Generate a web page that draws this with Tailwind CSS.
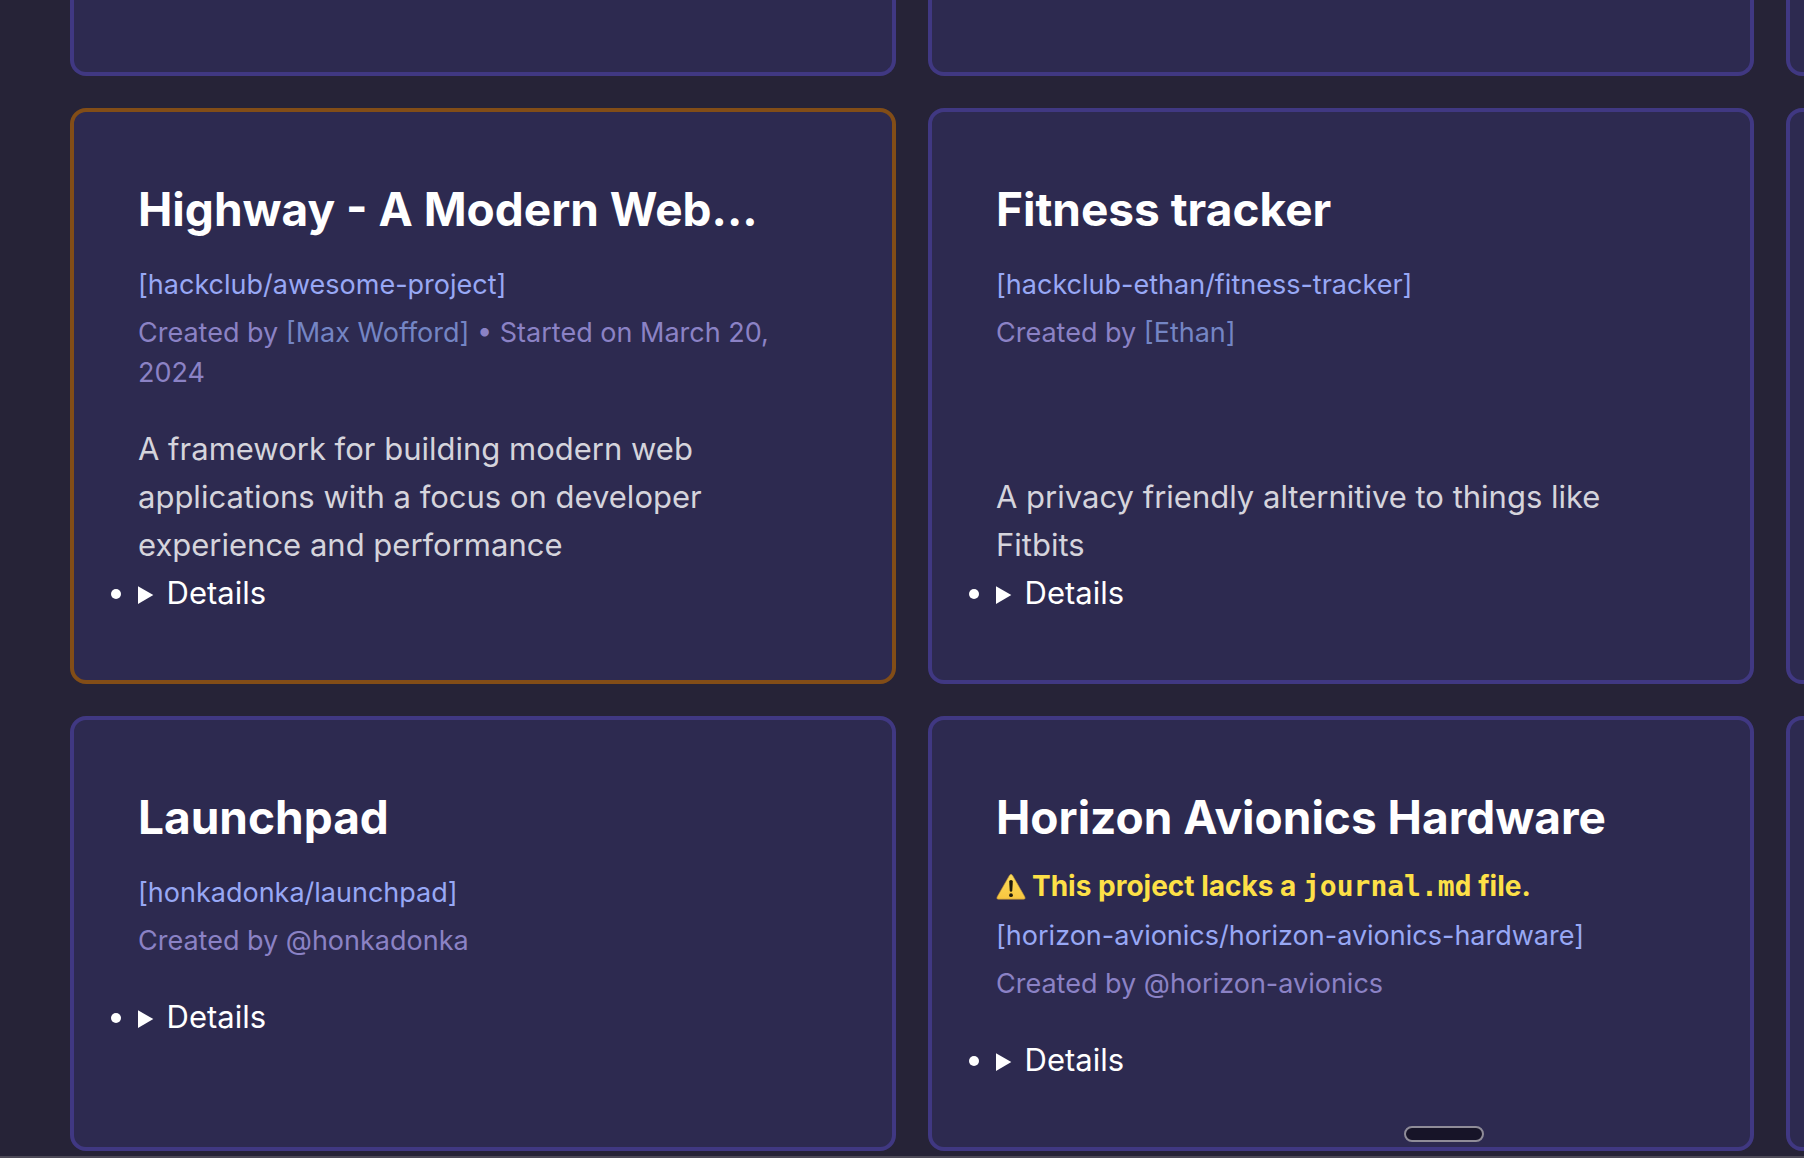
<!DOCTYPE html>
<html lang="en">
<head>
    <meta charset="UTF-8">
    <meta name="viewport" content="width=device-width, initial-scale=1.0">
    <title>Projects</title>
    <script src="https://cdn.jsdelivr.net/npm/@tailwindcss/browser@4"></script>
</head>
<body class="bg-[#262337] text-white font-['Inter',sans-serif] text-[31px] leading-[48px] h-screen overflow-hidden flex flex-col">
    <main class="flex-1 min-h-0 overflow-hidden pl-[70px]">
        <!-- two full columns, the third one peeks in at the right edge -->
        <div class="grid grid-cols-[repeat(3,calc((100vw-152px)/2))] gap-8">
            <div class="h-[76px] border-4 border-t-0 border-[#403882] bg-[#2d2a50] rounded-b-2xl"></div>
            <div class="h-[76px] border-4 border-t-0 border-[#403882] bg-[#2d2a50] rounded-b-2xl"></div>
            <div class="h-[76px] border-4 border-t-0 border-[#403882] bg-[#2d2a50] rounded-b-2xl"></div>

            <article class="flex flex-col border-4 border-[#824d17] bg-[#2d2a50] rounded-2xl px-16 pt-[65px] pb-[61px]">
                <h2 class="text-[46px] leading-[64px] font-bold truncate mb-4">Highway - A Modern Web...</h2>
                <a href="#" class="block text-[27px] leading-10 text-[#98a8f5] mt-2 mb-2">[hackclub/awesome-project]</a>
                <p class="text-[27px] leading-10 text-[#8b82c5] mb-8">Created by <a href="#" class="text-[#7485c4]">[Max Wofford]</a> • Started on March 20, 2024</p>
                <p class="text-[#d5d4dc] mt-auto">A framework for building modern web applications with a focus on developer experience and performance</p>
                <ul class="list-disc">
                    <li><details><summary class="[&::marker]:text-[27px]">Details</summary></details></li>
                </ul>
            </article>

            <article class="flex flex-col border-4 border-[#403882] bg-[#2d2a50] rounded-2xl px-16 pt-[65px] pb-[61px]">
                <h2 class="text-[46px] leading-[64px] font-bold truncate mb-4">Fitness tracker</h2>
                <a href="#" class="block text-[27px] leading-10 text-[#98a8f5] mt-2 mb-2">[hackclub-ethan/fitness-tracker]</a>
                <p class="text-[27px] leading-10 text-[#8b82c5] mb-8">Created by <a href="#" class="text-[#7485c4]">[Ethan]</a></p>
                <p class="text-[#d5d4dc] mt-auto">A privacy friendly alternitive to things like Fitbits</p>
                <ul class="list-disc">
                    <li><details><summary class="[&::marker]:text-[27px]">Details</summary></details></li>
                </ul>
            </article>

            <article class="border-4 border-[#403882] bg-[#2d2a50] rounded-2xl"></article>

            <article class="flex flex-col border-4 border-[#403882] bg-[#2d2a50] rounded-2xl px-16 pt-[65px] pb-[61px]">
                <h2 class="text-[46px] leading-[64px] font-bold truncate mb-4">Launchpad</h2>
                <a href="#" class="block text-[27px] leading-10 text-[#98a8f5] mt-2 mb-2">[honkadonka/launchpad]</a>
                <p class="text-[27px] leading-10 text-[#8b82c5] mb-8">Created by @honkadonka</p>
                <ul class="list-disc">
                    <li><details><summary class="[&::marker]:text-[27px]">Details</summary></details></li>
                </ul>
            </article>

            <article class="flex flex-col border-4 border-[#403882] bg-[#2d2a50] rounded-2xl px-16 pt-[65px] pb-[61px]">
                <h2 class="text-[46px] leading-[64px] font-bold truncate mb-4">Horizon Avionics Hardware</h2>
                <p class="flex items-center text-[28px] leading-[42px] font-bold text-[#fde047]">
                    <svg class="w-[30px] h-[26px] mr-1.5 shrink-0" viewBox="0 0 30 26" aria-hidden="true">
                        <defs>
                            <linearGradient id="warn" x1="0" y1="0" x2="0" y2="1">
                                <stop offset="0" stop-color="#fbdc5c"/>
                                <stop offset="1" stop-color="#f8c63f"/>
                            </linearGradient>
                        </defs>
                        <path d="M13.4 1.4Q15-.8 16.6 1.4L28.8 22.8Q30 25.2 27.6 25.2H2.4Q0 25.2 1.2 22.8Z" fill="url(#warn)" stroke="#b98d35" stroke-width=".6"/>
                        <path d="M13.2 7.6Q13.2 6 15 6T16.8 7.6L16.3 16.6Q16.2 17.8 15 17.8T13.7 16.6Z" fill="#1f1a0c"/>
                        <circle cx="15" cy="21.2" r="1.9" fill="#1f1a0c"/>
                    </svg>
                    <span>This project lacks a <code class="font-['DejaVu_Sans_Mono',monospace]">journal.md</code> file.</span>
                </p>
                <a href="#" class="block text-[27px] leading-10 text-[#98a8f5] mt-2 mb-2">[horizon-avionics/horizon-avionics-hardware]</a>
                <p class="text-[27px] leading-10 text-[#8b82c5] mb-8">Created by @horizon-avionics</p>
                <ul class="list-disc">
                    <li><details><summary class="[&::marker]:text-[27px]">Details</summary></details></li>
                </ul>
            </article>

            <article class="border-4 border-[#403882] bg-[#2d2a50] rounded-2xl"></article>
        </div>
    </main>
    <footer class="h-0.5 bg-[#4d4a58]"></footer>

    <!-- drag handle -->
    <div class="fixed bottom-4 right-80 w-20 h-4 rounded-lg border-2 border-[#8f8c98] bg-[#171428]"></div>
</body>
</html>
